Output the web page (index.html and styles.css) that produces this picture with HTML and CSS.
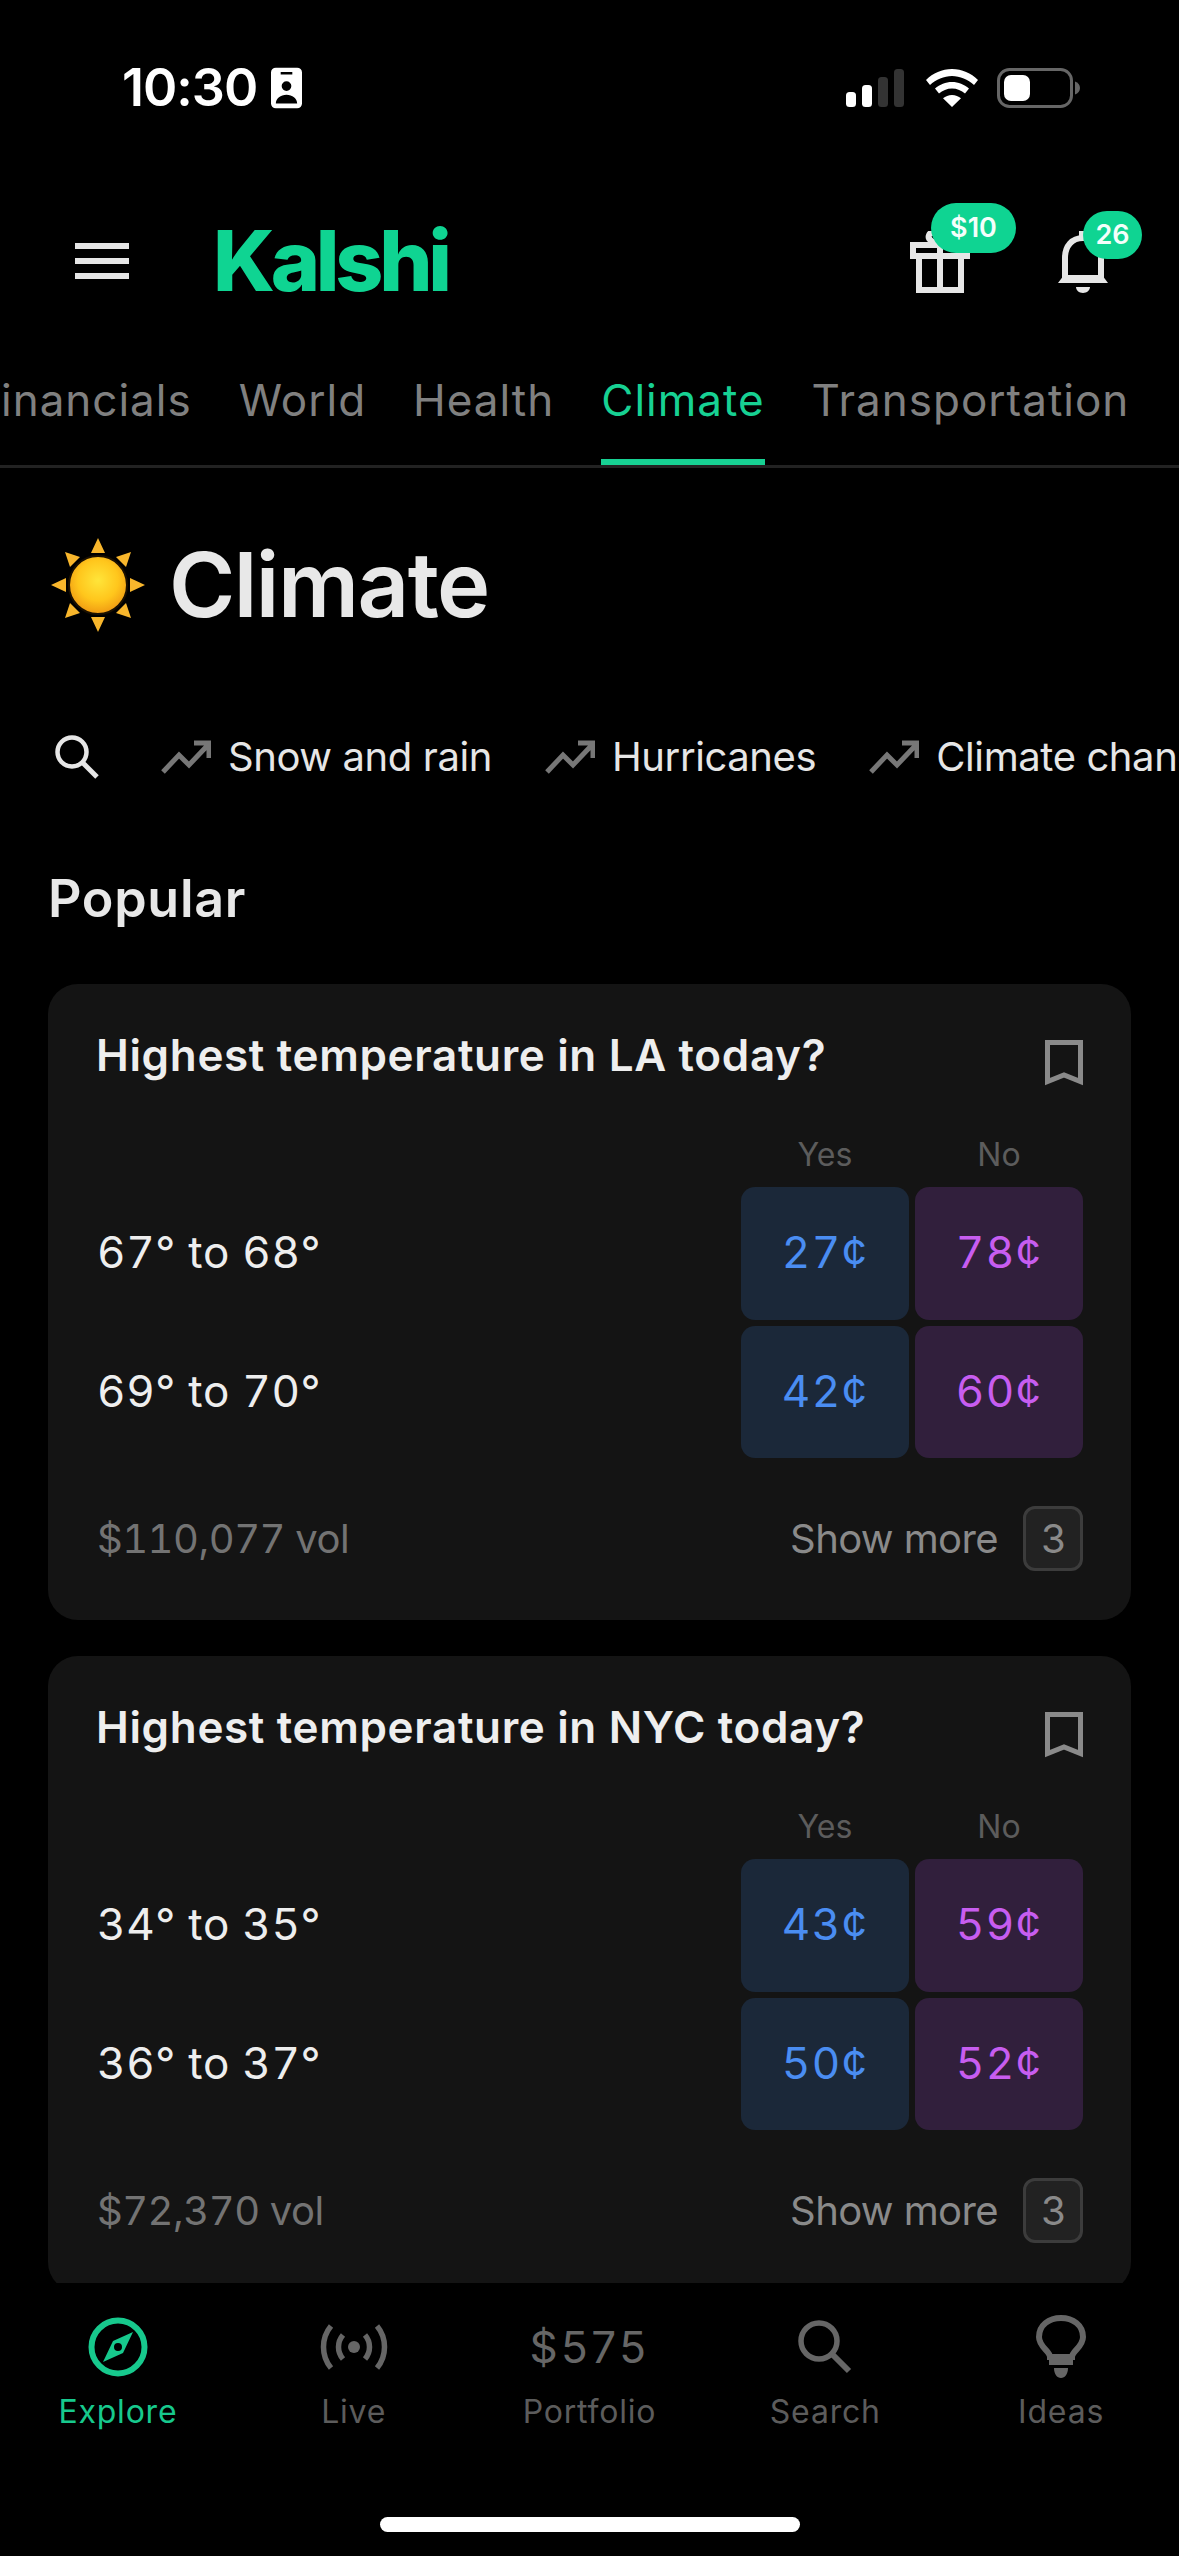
FILE: index.html
```html
<!DOCTYPE html>
<html lang="en">
<head>
<meta charset="utf-8">
<title>Kalshi Climate</title>
<link rel="stylesheet" href="styles.css">
</head>
<body>
<div class="app">
  <div class="status">
    <div class="status-left">
      <span class="time">10:30</span>
      <svg class="idcard" width="31" height="42" viewBox="0 0 32 42"><path fill="#fff" fill-rule="evenodd" d="M5 0h22a5 5 0 0 1 5 5v32a5 5 0 0 1-5 5H5a5 5 0 0 1-5-5V5a5 5 0 0 1 5-5zM10 4.500v2.500h12V4.500zM16 14a5 5 0 1 0 0 10a5 5 0 0 0 0-10zM5 37h22c0-5-5-9-11-9s-11 4-11 9z"/></svg>
    </div>
    <div class="status-right">
      <svg width="58" height="38" viewBox="0 0 58 38"><rect x="0" y="23" width="10" height="15" rx="3.500" fill="#fff"/><rect x="16" y="16" width="10" height="22" rx="3.500" fill="#fff"/><rect x="32" y="8" width="10" height="30" rx="3.500" fill="#333"/><rect x="48" y="0" width="10" height="38" rx="3.500" fill="#333"/></svg>
      <svg class="wifi" width="52" height="38" viewBox="0 0 52 38"><path fill="#fff" d="M26 0c10 0 19 4 26 11l-4 5c-6-5.500-14-9-22-9s-16 3.500-22 9l-4-5C7 4 16 0 26 0zM26 13c6.500 0 12 2.500 17 6.500l-4 5c-3.500-3-8-5-13-5s-9.500 2-13 5l-4-5c5-4 10.500-6.500 17-6.500zM26 26c3.500 0 6.500 1.300 9 3.300L26 38l-9-8.700c2.500-2 5.500-3.300 9-3.300z"/></svg>
      <svg class="battery" width="84" height="40" viewBox="0 0 84 40"><rect x="1.500" y="1.500" width="73" height="37" rx="11" fill="none" stroke="#666" stroke-width="3"/><rect x="7" y="7" width="26" height="26" rx="7" fill="#fff"/><path d="M78 13.500c3 1 5 3.500 5 6.500s-2 5.500-5 6.500z" fill="#666"/></svg>
    </div>
  </div>

  <header class="header">
    <div class="brand">
      <div class="burger"><i></i><i></i><i></i></div>
      <span class="logo">Kalshi</span>
    </div>
    <div class="actions">
      <div class="action action-gift">
        <svg width="60" height="62" viewBox="0 0 60 62"><g fill="none" stroke="#e6e6e6" stroke-width="6"><path d="M3 14h54v11H3zM9 25h42v34H9zM30 14v45"/><path d="M30 13c-6-1-13-4-11-9s9-2 11 9c2-11 9-14 11-9s-5 8-11 9z"/></g></svg>
        <span class="badge badge-gift">$10</span>
      </div>
      <div class="action action-bell">
        <svg width="50" height="64" viewBox="0 0 50 64"><path fill="none" stroke="#e6e6e6" stroke-width="6" d="M7 49V29C7 17 14 9 25 9s18 8 18 20v20"/><path fill="#e6e6e6" d="M6 46h38l6 8H0zM18 58h14c0 3-3 6-7 6s-7-3-7-6zM21 2h8v8h-8z"/></svg>
        <span class="badge badge-bell">26</span>
      </div>
    </div>
  </header>

  <nav class="tabs">
    <span class="tab tab-clip">Financials</span>
    <span class="tab">World</span>
    <span class="tab">Health</span>
    <span class="tab tab-active">Climate</span>
    <span class="tab">Transportation</span>
  </nav>

  <main class="main">
    <div class="title-row">
      <svg class="sun" width="94" height="94" viewBox="0 0 94 94">
        <defs><radialGradient id="sung" cx="50%" cy="42%" r="58%"><stop offset="0" stop-color="#ffe53a"/><stop offset=".6" stop-color="#ffc61c"/><stop offset="1" stop-color="#f09a12"/></radialGradient></defs>
        <g fill="#f8b62c">
          <path d="M47 0l7 15H40z"/>
          <path d="M47 94l-7-15h14z"/><path d="M0 47l15-7v14z"/><path d="M94 47l-15 7V40z"/>
          <path d="M14 14l15 5-10 10z"/><path d="M80 14l-5 15-10-10z"/><path d="M14 80l5-15 10 10z"/><path d="M80 80l-15-5 10-10z"/>
        </g>
        <circle cx="47" cy="47" r="29" fill="url(#sung)" stroke="#1b1000" stroke-width="2"/>
      </svg>
      <h1 class="title">Climate</h1>
    </div>

    <div class="chips">
      <svg class="chip-search" width="44" height="44" viewBox="0 0 44 44"><circle cx="17" cy="17" r="14.500" fill="none" stroke="#e6e6e6" stroke-width="4.500"/><path d="M27 27l15 15" stroke="#e6e6e6" stroke-width="5"/></svg>
      <div class="chip"><svg width="50" height="34" viewBox="0 0 50 34"><path d="M2 32L18 15l10 10L46 6M33 3h15v15" fill="none" stroke="#777" stroke-width="5"/></svg><span>Snow and rain</span></div>
      <div class="chip"><svg width="50" height="34" viewBox="0 0 50 34"><path d="M2 32L18 15l10 10L46 6M33 3h15v15" fill="none" stroke="#777" stroke-width="5"/></svg><span>Hurricanes</span></div>
      <div class="chip"><svg width="50" height="34" viewBox="0 0 50 34"><path d="M2 32L18 15l10 10L46 6M33 3h15v15" fill="none" stroke="#777" stroke-width="5"/></svg><span>Climate change</span></div>
    </div>

    <h2 class="section">Popular</h2>

    <article class="card">
      <div class="card-head">
        <h3 class="card-title">Highest temperature in LA today?</h3>
        <svg class="bookmark" width="38" height="46" viewBox="0 0 38 46"><path d="M2.500 2.500h33v39L19 35 2.500 41.500z" fill="none" stroke="#8a8a8a" stroke-width="5"/></svg>
      </div>
      <div class="table">
        <span class="col-label col-yes">Yes</span><span class="col-label">No</span>
        <span class="row-label">67° to 68°</span><button class="price price-yes">27¢</button><button class="price price-no">78¢</button>
        <span class="row-label">69° to 70°</span><button class="price price-yes">42¢</button><button class="price price-no">60¢</button>
      </div>
      <div class="card-foot">
        <span class="vol">$110,077 vol</span>
        <div class="more"><span>Show more</span><span class="count">3</span></div>
      </div>
    </article>

    <article class="card">
      <div class="card-head">
        <h3 class="card-title">Highest temperature in NYC today?</h3>
        <svg class="bookmark" width="38" height="46" viewBox="0 0 38 46"><path d="M2.500 2.500h33v39L19 35 2.500 41.500z" fill="none" stroke="#8a8a8a" stroke-width="5"/></svg>
      </div>
      <div class="table">
        <span class="col-label col-yes">Yes</span><span class="col-label">No</span>
        <span class="row-label">34° to 35°</span><button class="price price-yes">43¢</button><button class="price price-no">59¢</button>
        <span class="row-label">36° to 37°</span><button class="price price-yes">50¢</button><button class="price price-no">52¢</button>
      </div>
      <div class="card-foot">
        <span class="vol">$72,370 vol</span>
        <div class="more"><span>Show more</span><span class="count">3</span></div>
      </div>
    </article>
  </main>

  <footer class="bottom">
    <div class="bar">
      <div class="bar-item bar-active">
        <span class="bar-icon"><svg width="60" height="60" viewBox="0 0 60 60"><circle cx="30" cy="30" r="26.500" fill="none" stroke="#17c98d" stroke-width="6"/><path d="M45 15L35 36 15 45l10-21zM30 26a4 4 0 1 0 0 8a4 4 0 0 0 0-8z" fill="#17c98d" fill-rule="evenodd"/></svg></span>
        <span class="bar-label">Explore</span>
      </div>
      <div class="bar-item">
        <span class="bar-icon"><svg width="68" height="46" viewBox="0 0 68 46"><circle cx="34" cy="23" r="6" fill="#666"/><g fill="none" stroke="#666" stroke-width="5.500"><path d="M23 11c-6 7-6 17 0 24M45 11c6 7 6 17 0 24"/><path d="M11 2C1 14 1 32 11 44M57 2c10 12 10 30 0 42"/></g></svg></span>
        <span class="bar-label">Live</span>
      </div>
      <div class="bar-item">
        <span class="bar-icon bar-amount">$575</span>
        <span class="bar-label">Portfolio</span>
      </div>
      <div class="bar-item">
        <span class="bar-icon"><svg width="54" height="54" viewBox="0 0 54 54"><circle cx="21" cy="21" r="18" fill="none" stroke="#666" stroke-width="5.500"/><path d="M33 33l18 18" stroke="#666" stroke-width="6"/></svg></span>
        <span class="bar-label">Search</span>
      </div>
      <div class="bar-item">
        <span class="bar-icon"><svg width="50" height="64" viewBox="0 0 50 64"><path d="M14 42c0-6-11-10-11-20C3 10 13 3 25 3s22 7 22 19c0 10-11 14-11 20z" fill="none" stroke="#666" stroke-width="6"/><path d="M13 44h24v6H13zM18 53h14c0 6-3 10-7 10s-7-4-7-10z" fill="#666"/></svg></span>
        <span class="bar-label">Ideas</span>
      </div>
    </div>
    <div class="home"></div>
  </footer>
</div>
</body>
</html>
```
FILE: styles.css
```css
* { box-sizing: border-box; }
html, body { margin: 0; padding: 0; background: #000; }
body { font-family: Inter, "Noto Sans", sans-serif; color: #e6e6e6; }
.app { width: 1179px; height: 2556px; display: flex; flex-direction: column; overflow: hidden; background: #000; }
svg { display: block; flex: none; }

.status { height: 160px; flex: none; display: flex; justify-content: space-between; align-items: flex-start; padding: 66px 98px 0 122px; }
.status-left { display: flex; align-items: center; gap: 14px; }
.time { font-size: 52px; line-height: 44px; font-weight: 600; color: #fff; letter-spacing: -1px; }
.status-right { display: flex; align-items: center; gap: 22px; padding-top: 2px; }
.battery { margin-left: -3px; }

.header { height: 202px; flex: none; display: flex; justify-content: space-between; align-items: center; padding: 0 71px 0 75px; }
.brand { display: flex; align-items: center; gap: 84px; }
.burger { width: 54px; display: flex; flex-direction: column; gap: 9px; }
.burger i { display: block; height: 6px; background: #e6e6e6; }
.logo { font-size: 84px; line-height: 90px; font-weight: 800; color: #0fd492; letter-spacing: -4.300px; }
.actions { display: flex; align-items: flex-end; gap: 88px; }
.action { position: relative; }
.badge { position: absolute; background: #0fd492; color: #f4fffb; font-weight: 600; font-size: 27px; height: 50px; line-height: 50px; border-radius: 25px; text-align: center; }
.badge-gift { width: 85px; left: 21px; top: -28px; }
.badge-bell { width: 59px; height: 48px; line-height: 48px; left: 25px; top: -18px; }

.tabs { height: 106px; flex: none; display: flex; gap: 47px; border-bottom: 3px solid #222; overflow: hidden; white-space: nowrap; }
.tab { font-size: 44px; line-height: 76px; letter-spacing: 1px; padding-bottom: 21px; border-bottom: 6px solid transparent; color: #808080; height: 103px; }
.tab-clip { margin-left: -26px; }
.tab-active { color: #17d193; border-bottom-color: #17d193; }

.main { flex: 1; min-height: 0; overflow: hidden; padding: 67px 48px 0; }
.title-row { display: flex; align-items: center; gap: 24px; height: 100px; padding-left: 3px; }
.title { margin: 0; font-size: 90px; line-height: 100px; font-weight: 600; color: #e8e8e8; letter-spacing: -1.500px; }

.chips { display: flex; align-items: center; gap: 53px; height: 60px; margin-top: 92px; margin-right: -48px; padding-left: 7px; white-space: nowrap; }
.chip { display: flex; align-items: center; gap: 17px; font-size: 40px; line-height: 60px; color: #e6e6e6; flex: none; letter-spacing: -0.4px; }
.chip-search { margin-right: 9px; }

.section { margin: 80px 0 53px; font-size: 52px; line-height: 64px; font-weight: 600; color: #e8e8e8; letter-spacing: 0.7px; }

.card { background: #141414; border-radius: 30px; padding: 41px 48px 49px; margin-bottom: 36px; }
.card-head { display: flex; justify-content: space-between; align-items: flex-start; height: 60px; }
.card-title { margin: 0; font-size: 44px; line-height: 60px; font-weight: 600; color: #eee; letter-spacing: 0.65px; }
.bookmark { margin-top: 15px; }
.table { display: grid; grid-template-columns: 1fr 168px 168px; grid-template-rows: 46px 132.500px 132.500px; column-gap: 6px; row-gap: 6px; margin-top: 50px; align-items: center; }
.col-label { font-size: 32px; line-height: 40px; color: #5c5c5c; text-align: center; align-self: start; }
.col-yes { grid-column: 2; }
.row-label { font-size: 44px; color: #eee; letter-spacing: 0.6px; padding: 0 0 2px 1px; font-variant-numeric: tabular-nums; }
.price { border: 0; border-radius: 14px; font-family: inherit; font-size: 44px; letter-spacing: 1.500px; padding: 0 0 2px; align-self: stretch; font-variant-numeric: tabular-nums; }
.price-yes { background: #1b2839; color: #4a8df2; }
.price-no { background: #311f3c; color: #c75df0; }
.card-foot { display: flex; justify-content: space-between; align-items: center; height: 65px; margin-top: 48px; }
.vol { font-size: 40px; color: #737373; letter-spacing: -0.5px; padding-left: 1px; font-variant-numeric: tabular-nums; }
.more { display: flex; align-items: center; gap: 25px; font-size: 40px; color: #8a8a8a; letter-spacing: -0.6px; }
.count { width: 60px; height: 65px; line-height: 59px; text-align: center; border: 3px solid #3c3c3c; border-radius: 12px; background: #222; }

.bottom { flex: none; height: 273px; background: #000; display: flex; flex-direction: column; align-items: center; padding-top: 24px; }
.bar { width: 100%; display: grid; grid-template-columns: repeat(5, 1fr); }
.bar-item { display: flex; flex-direction: column; align-items: center; gap: 5px; }
.bar-icon { height: 80px; display: flex; align-items: center; justify-content: center; }
.bar-amount { font-size: 44px; color: #666; letter-spacing: 3.500px; }
.bar-label { font-size: 32px; line-height: 40px; color: #5c5c5c; letter-spacing: 0.8px; }
.bar-active .bar-label { color: #17c98d; }
.home { width: 420px; height: 15px; border-radius: 8px; background: #fff; margin-top: 85px; }
```
